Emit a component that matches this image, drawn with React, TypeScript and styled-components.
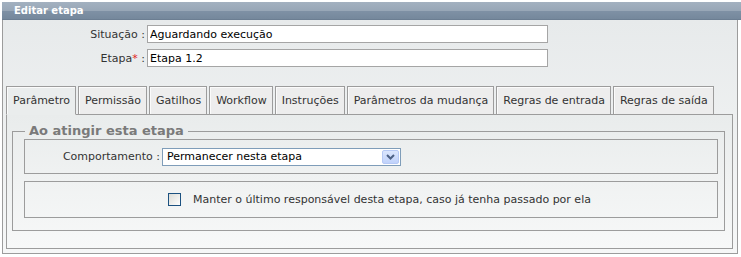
import React from 'react';
import styled, { createGlobalStyle } from 'styled-components';

const GlobalStyle = createGlobalStyle`
  body {
    margin: 0;
    background: #ffffff;
    font-family: 'DejaVu Sans', Verdana, sans-serif;
    font-size: 11px;
    color: #333333;
  }
`;

type tabProps = {
    active?: boolean;
}

type labelProps = {
    width?: number;
}

const Window = styled.div`
    margin: 2px 0 0 2px;
    width: 739px;
`

const TitleBar = styled.div`
    height: 18px;
    box-sizing: border-box;
    padding-left: 12px;
    display: flex;
    align-items: center;
    color: #ffffff;
    font-weight: bold;
    font-size: 10px;
    background: linear-gradient(to bottom, #a3b1c0 0%, #98a7b7 50%, #7f91a5 52%, #75889c 100%);
    border-bottom: 1px solid #6c7e92;
`

const Body = styled.div`
    width: 736px;
    box-sizing: border-box;
    border: 1px solid #9c9c9c;
    border-top: none;
    padding: 5px 3px 4px 3px;
    background: linear-gradient(to bottom, #e7eaeb 0%, #f6f7f7 100%);
`

const FormRow = styled.div`
    display: flex;
    align-items: center;
    height: 18px;
    & + & {
        margin-top: 6px;
    }
`

const Label = styled.label<labelProps>`
    width: ${(props) => props.width || 139}px;
    text-align: right;
    padding-right: 2px;
    color: #333333;
    white-space: nowrap;
`

const Required = styled.span`
    color: #e02020;
`

const TextInput = styled.input`
    width: 401px;
    height: 18px;
    box-sizing: border-box;
    border: 1px solid #a5a5a5;
    background: #ffffff;
    padding: 0 2px;
    margin: 0;
    font-family: 'DejaVu Sans', Verdana, sans-serif;
    font-size: 11px;
    color: #000000;
`

const TabStrip = styled.div`
    display: flex;
    align-items: flex-end;
    gap: 2px;
    margin-top: 19px;
    position: relative;
    z-index: 1;
`

const Tab = styled.div<tabProps>`
    height: 29px;
    box-sizing: border-box;
    padding: 0 5px 0 6px;
    display: flex;
    align-items: center;
    white-space: nowrap;
    color: #333333;
    border: 1px solid #9c9c9c;
    border-bottom-color: ${(props) => props.active ? '#eaeded' : '#9c9c9c'};
    background: ${(props) => props.active ? '#eaeded' : '#ededed'};
    box-shadow: inset 1px 1px 0 #fbfbfb;
    margin-bottom: -1px;
`

const TabPanel = styled.div`
    margin-right: 1px;
    border: 1px solid #9c9c9c;
    background: linear-gradient(to bottom, #e9ecec 0%, #f7f8f8 100%);
    padding: 8px 7px 17px 5px;
`

const Group = styled.fieldset`
    margin: 0;
    border: 1px solid #9c9c9c;
    padding: 0 6px 12px 11px;
`

const Legend = styled.legend`
    margin-left: 1px;
    padding: 0 4px;
    line-height: 16px;
    font-size: 13px;
    font-weight: bold;
    color: #7a7a7a;
`

const OptionBox = styled.div<{ height: number }>`
    display: flex;
    align-items: center;
    height: ${(props) => props.height}px;
    box-sizing: border-box;
    border: 1px solid #9c9c9c;
    & + & {
        margin-top: 7px;
    }
`

const Select = styled.div`
    width: 239px;
    height: 18px;
    box-sizing: border-box;
    border: 1px solid #7f9db9;
    background: #ffffff;
    display: flex;
    align-items: center;
    justify-content: space-between;
    padding-left: 4px;
    color: #000000;
`

const SelectButton = styled.span`
    width: 17px;
    height: 14px;
    margin-right: 1px;
    box-sizing: border-box;
    border: 1px solid #b6c9f5;
    border-radius: 2px;
    background: linear-gradient(to bottom, #dbe6fd 0%, #c0d2fb 100%);
    display: flex;
    align-items: center;
    justify-content: center;
`

const CheckRow = styled.label`
    display: flex;
    align-items: center;
    padding-left: 143px;
    color: #333333;
    gap: 12px;
`

const CheckBox = styled.span`
    width: 13px;
    height: 13px;
    box-sizing: border-box;
    border: 1px solid #1c5180;
    background: linear-gradient(135deg, #dcdcd6 0%, #f4f4f2 70%, #ffffff 100%);
`

const tabs = [
    'Parâmetro',
    'Permissão',
    'Gatilhos',
    'Workflow',
    'Instruções',
    'Parâmetros da mudança',
    'Regras de entrada',
    'Regras de saída',
];

export default function App() {
    return (
        <>
            <GlobalStyle />
            <Window>
                <TitleBar>Editar etapa</TitleBar>
                <Body>
                    <FormRow>
                        <Label>Situação :</Label>
                        <TextInput defaultValue="Aguardando execução" />
                    </FormRow>
                    <FormRow>
                        <Label>Etapa<Required>*</Required> :</Label>
                        <TextInput defaultValue="Etapa 1.2" />
                    </FormRow>

                    <TabStrip>
                        {tabs.map((t, i) => (
                            <Tab key={t} active={i === 0}>{t}</Tab>
                        ))}
                    </TabStrip>
                    <TabPanel>
                        <Group>
                            <Legend>Ao atingir esta etapa</Legend>
                            <OptionBox height={35}>
                                <Label width={135}>Comportamento :</Label>
                                <Select>
                                    Permanecer nesta etapa
                                    <SelectButton>
                                        <svg width="9" height="6" viewBox="0 0 9 6">
                                            <path d="M1 1 L4.5 4.5 L8 1" fill="none" stroke="#4d6185" strokeWidth="2" />
                                        </svg>
                                    </SelectButton>
                                </Select>
                            </OptionBox>
                            <OptionBox height={37}>
                                <CheckRow>
                                    <CheckBox />
                                    Manter o último responsável desta etapa, caso já tenha passado por ela
                                </CheckRow>
                            </OptionBox>
                        </Group>
                    </TabPanel>
                </Body>
            </Window>
        </>
    );
}
